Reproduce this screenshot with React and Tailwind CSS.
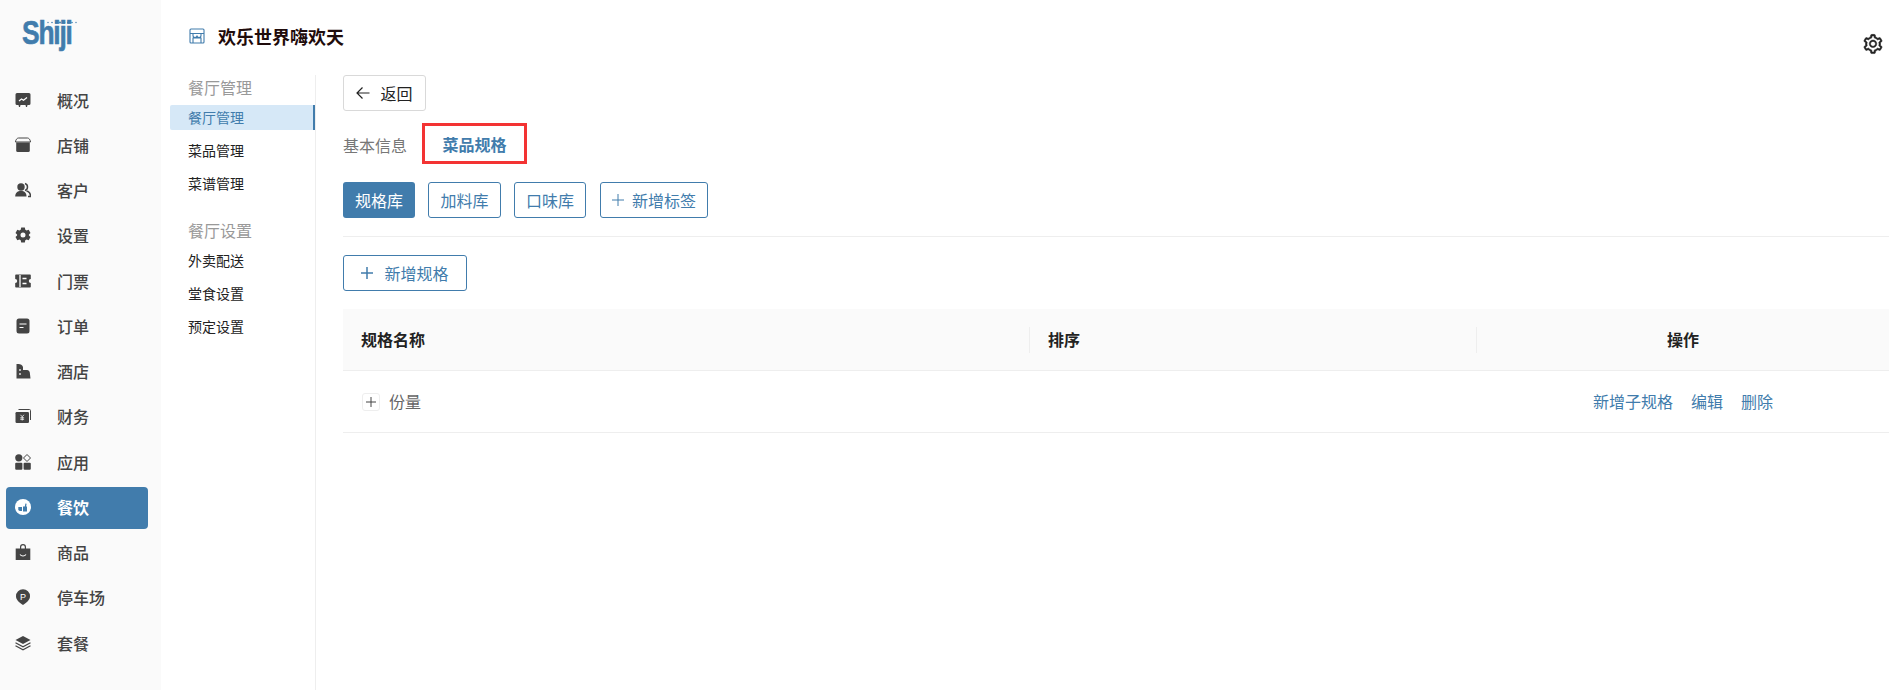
import React from 'react';
import { AiOutlineSetting } from 'react-icons/ai';

const Overview = () => (
    <svg viewBox="0 0 16 16" className="w-4 h-4">
        <path d="M2 1h12a1.5 1.5 0 0 1 1.5 1.500v9a1.500 1.500 0 0 1-1.500 1.500h-1.500l-.5 2h-1l-.5-2h-5l-.5 2h-1l-.5-2H2a1.500 1.500 0 0 1-1.500-1.500v-9A1.500 1.500 0 0 1 2 1z" fill="currentColor" />
        <path d="M4 9l2.500-2 2 1.200L12 5.500" fill="none" stroke="#fff" strokeWidth="1.200" />
    </svg>
);
const Store = () => (
    <svg viewBox="0 0 16 16" className="w-4 h-4">
        <path d="M3.500 1h9c1.500 0 3 2 3 4H.5c0-2 1.500-4 3-4z" fill="none" stroke="currentColor" strokeWidth="1" />
        <path d="M1.200 5.500h13.600v8A1.500 1.500 0 0 1 13.300 15H2.700a1.500 1.500 0 0 1-1.500-1.500z" fill="currentColor" />
    </svg>
);
const Customers = () => (
    <svg viewBox="0 0 16 16" className="w-4 h-4">
        <circle cx="6" cy="5" r="3.700" fill="currentColor" />
        <path d="M.2 14.500c0-3.500 2-5.500 5.800-5.500s5.500 2 5.500 5.500z" fill="currentColor" />
        <path d="M10 1.500a3.700 3.700 0 0 1 0 7M11.500 9c2.500.6 4 2.800 4 5.500h-2.500" fill="none" stroke="currentColor" strokeWidth="1.500" />
    </svg>
);
const Gear = () => (
    <svg viewBox="0 0 16 16" className="w-4 h-4">
        <path fillRule="evenodd" fill="currentColor" d="M6.200.6h3.600l.5 2.200 1.300.7 2.100-.7 1.800 3.100-1.600 1.500v1.200l1.600 1.500-1.800 3.100-2.100-.7-1.300.7-.5 2.200H6.200l-.5-2.200-1.300-.7-2.100.7L.5 10.100l1.600-1.500V7.400L.5 5.900l1.800-3.100 2.100.7 1.300-.7zM8 5.500a2.500 2.500 0 1 0 0 5 2.500 2.500 0 0 0 0-5z" />
    </svg>
);
const Ticket = () => (
    <svg viewBox="0 0 16 16" className="w-4 h-4">
        <path fill="currentColor" d="M1 1.500h14a.8.8 0 0 1 .8.8V6a2 2 0 0 0 0 4v3.700a.8.8 0 0 1-.8.8H1a.8.8 0 0 1-.8-.8V10a2 2 0 0 0 0-4V2.300A.8.8 0 0 1 1 1.500z" />
        <path d="M5 2v12M7.500 5.500h4M7.500 10.500h4" stroke="#fff" strokeWidth="1.300" fill="none" />
    </svg>
);
const Order = () => (
    <svg viewBox="0 0 16 16" className="w-4 h-4">
        <rect x="1.500" y="0.500" width="13" height="15" rx="2.500" fill="currentColor" />
        <path d="M4.500 6h7M4.500 9.500h4" stroke="#fff" strokeWidth="1.200" />
    </svg>
);
const Hotel = () => (
    <svg viewBox="0 0 16 16" className="w-4 h-4">
        <path fill="currentColor" d="M1.500 15.500V1h2c2 0 4 1 4.500 3v3H12c1.500 0 2.500 1 2.800 2.500l.7 6z" />
        <path d="M5 6v2M5 10v2" stroke="#fff" strokeWidth="1.200" />
    </svg>
);
const Finance = () => (
    <svg viewBox="0 0 16 16" className="w-4 h-4">
        <path d="M3.500 1.500h11a1 1 0 0 1 1 1v9.500" fill="none" stroke="currentColor" strokeWidth="1" />
        <rect x="0.500" y="4" width="13.500" height="11" rx="1.200" fill="currentColor" />
        <path d="M5.500 6.800l1.700 2 1.700-2M7.200 8.800v3.700M5.300 9.800h3.800M5.300 11.300h3.800" stroke="#fff" strokeWidth="0.800" fill="none" />
    </svg>
);
const Apps = () => (
    <svg viewBox="0 0 16 16" className="w-4 h-4">
        <circle cx="3.800" cy="3.800" r="3.600" fill="currentColor" />
        <path d="M12 .5l3.500 3.500-3.500 3.500L8.500 4z" fill="none" stroke="currentColor" strokeWidth="1" />
        <rect x="0.200" y="8.800" width="7.200" height="7" rx="1" fill="currentColor" />
        <rect x="8.600" y="8.800" width="7.200" height="7" rx="1" fill="currentColor" />
    </svg>
);
const Dining = () => (
    <svg viewBox="0 0 16 16" className="w-4 h-4">
        <circle cx="8" cy="8" r="8" fill="#fff" />
        <path d="M8 7.500h4v5H8zM9.800 7.500l.6-3 1.200.3-.5 2.700z" fill="#417cac" />
        <path d="M3.300 8h3.700v4H5a1.700 1.700 0 0 1-1.700-1.700z" fill="#417cac" />
    </svg>
);
const Goods = () => (
    <svg viewBox="0 0 16 16" className="w-4 h-4">
        <path fill="currentColor" d="M.7 4.500h4.300V3a3 3 0 0 1 6 0v1.500h4.300V16H.7zM6.200 4.500h3.600V3a1.800 1.800 0 0 0-3.600 0z" />
        <path d="M5 10.500c1.500 2 4.500 2 6 0" stroke="#fff" strokeWidth="1.100" fill="none" />
    </svg>
);
const Parking = () => (
    <svg viewBox="0 0 16 16" className="w-4 h-4">
        <path fill="currentColor" d="M8 .2a7 7 0 0 1 7 7c0 3.500-3 6-7 8.800-4-2.800-7-5.300-7-8.800a7 7 0 0 1 7-7z" />
        <text x="8" y="10.800" textAnchor="middle" fontSize="9" fontWeight="400" fontFamily="Liberation Sans, sans-serif" fill="#fff">P</text>
    </svg>
);
const Layers = () => (
    <svg viewBox="0 0 16 16" className="w-4 h-4">
        <path d="M8 1l7.500 4L8 9 .5 5z" fill="currentColor" />
        <path d="M.5 7.800L8 11.800l7.500-4M.5 10.800L8 14.800l7.500-4" fill="none" stroke="currentColor" strokeWidth="1.200" />
    </svg>
);

const mainMenu = [
    { label: '概况', icon: Overview },
    { label: '店铺', icon: Store },
    { label: '客户', icon: Customers },
    { label: '设置', icon: Gear },
    { label: '门票', icon: Ticket },
    { label: '订单', icon: Order },
    { label: '酒店', icon: Hotel },
    { label: '财务', icon: Finance },
    { label: '应用', icon: Apps },
    { label: '餐饮', icon: Dining, active: true },
    { label: '商品', icon: Goods },
    { label: '停车场', icon: Parking },
    { label: '套餐', icon: Layers },
];

const App = () => {
    const subItem = "h-[25px] mt-2 pl-[18px] pb-0.5 flex items-center text-sm text-[#222]";
    const outlineBtn = "h-9 flex items-center justify-center rounded-[3px] border border-[#417cac] text-[#417cac]";

    return (
        <div className="flex h-[690px] overflow-hidden bg-white font-['Noto_Sans_CJK_SC',sans-serif] text-base">
            {/* Main sidebar */}
            <aside className="w-[161px] shrink-0 bg-[#fafafa]">
                <div className="h-[78px] pl-[22px] pt-[14px]">
                    <div className="relative w-[60px]">
                        <span className="block w-[70px] font-['Liberation_Sans',sans-serif] font-bold text-[33px] leading-[38px] tracking-[-1.500px] text-[#417cac] [-webkit-text-stroke:0.6px_#417cac] origin-left scale-x-[0.8]">Shiji</span>
                        <svg viewBox="0 0 32 3" className="absolute left-[25px] top-[7px] w-8 h-[3px] text-[#417cac]" fill="currentColor">
                            <circle cx="1" cy="1.500" r="0.700" />
                            <circle cx="5" cy="1.500" r="0.800" />
                            <circle cx="9" cy="1.500" r="1" />
                            <circle cx="13" cy="1.500" r="1" />
                            <circle cx="17" cy="1.500" r="1.200" />
                            <circle cx="21" cy="1.500" r="1" />
                            <circle cx="25" cy="1.500" r="0.800" />
                            <circle cx="29" cy="1.500" r="0.700" />
                        </svg>
                    </div>
                </div>
                <nav className="pl-1.5 pr-[13px] pt-[2px]">
                    {mainMenu.map(({ label, icon: Icon, active }) => (
                        <div
                            key={label}
                            className={`h-[41.250px] mb-1 pl-[9px] pb-0.5 flex items-center rounded-[4px] ${active ? 'bg-[#417cac] text-white font-bold' : 'text-[#444] font-medium'}`}
                        >
                            <Icon />
                            <span className="ml-[26px]">{label}</span>
                        </div>
                    ))}
                </nav>
            </aside>

            <div className="flex-1 min-w-0 flex flex-col">
                {/* Header */}
                <header className="h-[75px] shrink-0 flex justify-between pl-[28px] pr-[11px]">
                    <div className="flex items-center h-[72px] gap-[13px]">
                        <svg viewBox="0 0 16 16" className="w-4 h-4 text-[#417cac]" fill="none" stroke="currentColor" strokeWidth="1.100">
                            <path d="M1 5.500V2a1 1 0 0 1 1-1h12a1 1 0 0 1 1 1v3.500M1 5.500h14M1 5.500V14a1 1 0 0 0 1 1h12a1 1 0 0 0 1-1V5.500M4 15v-5h8v5M4 5.500v2a1.500 1.500 0 0 0 4 0 1.500 1.500 0 0 0 4 0v-2" />
                        </svg>
                        <h1 className="text-lg font-bold text-[#1f0c0c]">欢乐世界嗨欢天</h1>
                    </div>
                    <div className="pt-[33px]">
                        <AiOutlineSetting className="w-[22px] h-[22px] text-[#222]" stroke="currentColor" strokeWidth={24} />
                    </div>
                </header>

                <div className="flex-1 flex min-h-0">
                    {/* Sub menu */}
                    <div className="w-[155px] shrink-0 border-r border-[#eeeeee] pl-[9px]">
                        <div className="h-[26px] pl-[18px] pb-0.5 flex items-center text-[#999]">餐厅管理</div>
                        <div className="h-[25px] mt-1 pl-[18px] pb-0.5 flex items-center text-sm text-[#417cac] bg-[#d6e8f7] border-r-2 border-[#417cac] rounded-l-[2px]">餐厅管理</div>
                        <div className={subItem}>菜品管理</div>
                        <div className={subItem}>菜谱管理</div>
                        <div className="h-[26px] mt-[22px] pl-[18px] pb-0.5 flex items-center text-[#999]">餐厅设置</div>
                        <div className="h-[25px] mt-1 pl-[18px] pb-0.5 flex items-center text-sm text-[#222]">外卖配送</div>
                        <div className={subItem}>堂食设置</div>
                        <div className={subItem}>预定设置</div>
                    </div>

                    {/* Content */}
                    <main className="flex-1 min-w-0 pl-[27px] pr-1.5">
                        <button className="w-[83px] h-9 flex items-center justify-center gap-2.5 rounded-[3px] border border-[#d9d9d9] text-[#222]">
                            <svg viewBox="0 0 14 14" className="w-3.5 h-3.5" fill="none" stroke="currentColor" strokeWidth="1.200">
                                <path d="M13.500 7H1M6.500 1.500L1 7l5.500 5.500" />
                            </svg>
                            返回
                        </button>

                        <div className="mt-3 flex items-center gap-[15px]">
                            <span className="pt-0.5 text-[#777]">基本信息</span>
                            <span className="w-[105px] h-[41px] pt-px flex items-center justify-center border-[3px] border-[#f33333] font-bold text-[#417cac]">菜品规格</span>
                        </div>

                        <div className="mt-[18px] flex gap-[13px]">
                            <button className="w-[72px] h-9 pb-px rounded-[3px] bg-[#417cac] text-white">规格库</button>
                            <button className={`${outlineBtn} w-[73px] pb-px`}>加料库</button>
                            <button className={`${outlineBtn} w-[72px] pb-px`}>口味库</button>
                            <button className={`${outlineBtn} w-[108px] ml-px pb-px gap-2`}>
                                <svg viewBox="0 0 12 12" className="w-3 h-3" stroke="currentColor" strokeWidth="1">
                                    <path d="M6 0v12M0 6h12" />
                                </svg>
                                新增标签
                            </button>
                        </div>

                        <div className="mt-[18px] h-px bg-[#eeeeee]" />

                        <button className={`${outlineBtn} mt-[18px] w-[124px] gap-[11px]`}>
                            <svg viewBox="0 0 12 12" className="w-3 h-3" stroke="currentColor" strokeWidth="1.500">
                                <path d="M6 0v12M0 6h12" />
                            </svg>
                            新增规格
                        </button>

                        {/* Table */}
                        <div className="mt-[18px]">
                            <div className="grid grid-cols-[687px_447px_1fr] h-[62px] items-center bg-[#fafafa] border-b border-[#eeeeee] font-bold text-[#222]">
                                <div className="flex items-center justify-between pl-[18px]">
                                    <span className="pb-0.5">规格名称</span>
                                    <span className="w-px h-[26px] bg-[#eeeeee]" />
                                </div>
                                <div className="flex items-center justify-between pl-[18px]">
                                    <span className="pb-0.5">排序</span>
                                    <span className="w-px h-[26px] bg-[#eeeeee]" />
                                </div>
                                <div className="pb-0.5 text-center">操作</div>
                            </div>
                            <div className="grid grid-cols-[687px_447px_1fr] h-[62px] items-center border-b border-[#eeeeee]">
                                <div className="flex items-center pl-[19px] gap-[9px] text-[#666]">
                                    <span className="w-[18px] h-[18px] flex items-center justify-center rounded-[3px] border border-[#eeeeee] text-[#444]">
                                        <svg viewBox="0 0 10 10" className="w-2.5 h-2.5" stroke="currentColor" strokeWidth="1">
                                            <path d="M5 0v10M0 5h10" />
                                        </svg>
                                    </span>
                                    <span className="pb-0.5">份量</span>
                                </div>
                                <div />
                                <div className="flex justify-center gap-[18px] pb-0.5 text-[#417cac]">
                                    <span>新增子规格</span>
                                    <span>编辑</span>
                                    <span>删除</span>
                                </div>
                            </div>
                        </div>
                    </main>
                </div>
            </div>
        </div>
    );
};

export default App;
